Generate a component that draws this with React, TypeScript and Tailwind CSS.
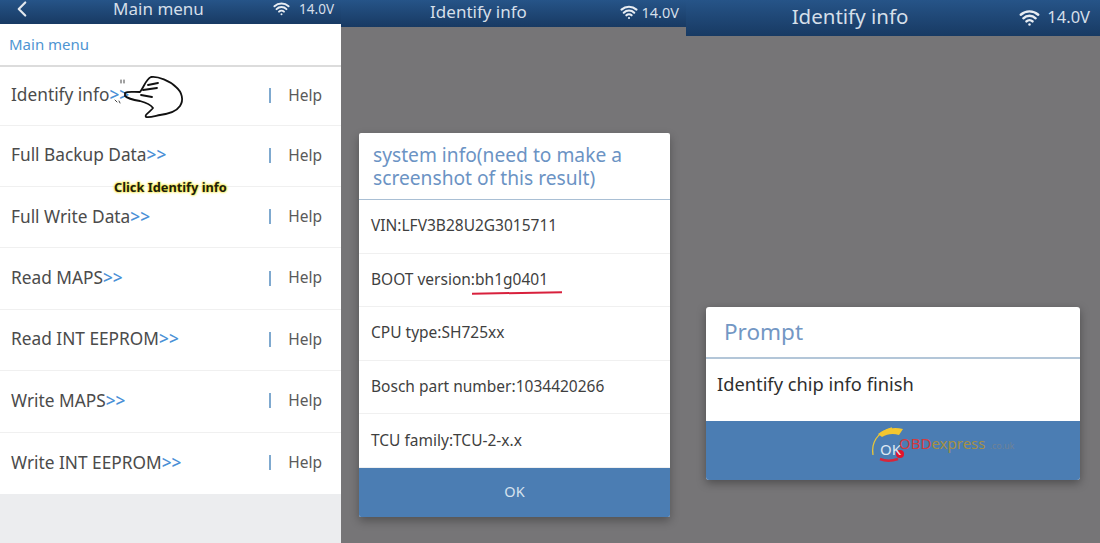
import * as React from 'react';
import { ChevronLeft, Wifi } from 'lucide-react';

const menuItems = [
  'Identify info',
  'Full Backup Data',
  'Full Write Data',
  'Read MAPS',
  'Read INT EEPROM',
  'Write MAPS',
  'Write INT EEPROM',
];

const systemInfo = [
  'VIN:LFV3B28U2G3015711',
  'BOOT version:bh1g0401',
  'CPU type:SH725xx',
  'Bosch part number:1034420266',
  'TCU family:TCU-2-x.x',
];

const Hand = () => (
  <svg
    className="absolute left-[110px] top-[74px]"
    width="78"
    height="48"
    viewBox="110 74 78 48"
    fill="none"
    stroke="#111"
    strokeWidth="1.8"
    strokeLinecap="round"
    strokeLinejoin="round"
  >
    <path d="M125 93 C127 91 133 92 140 92 C144 87 146 79 151 77 C158 76 170 81 176 87 C182 92 184 100 180 106 C176 112 168 114 160 115 C155 116 149 118 146 117 C144 115 150 112 153 108 C151 105 147 103 140 101 C134 100 128 99 125 96 Z" />
    <path d="M148 85 L158 83 M143 90 L157 88 M141 95 L152 97" />
    <path d="M121 80 L121 83 M124 80 L124 83 M115 100 L117 102 M119 101 L120 103" stroke="#444" strokeWidth="1" />
  </svg>
);

const Watermark = () => (
  <div className="absolute left-[164px] top-[2px] h-[56px] w-[160px]">
    <svg className="absolute left-0 top-0" width="40" height="50" viewBox="0 0 40 50" fill="none">
      <path d="M3 32 C1 20 7 9 22 5" stroke="#e8c53a" strokeWidth="1.3" />
      <path d="M8 11 C13 7 22 3 33 6 L29 12 C23 10 17 11 12 14 Z" fill="#f3c62f" />
      <path d="M10 36 C15 38 22 38 28 36" stroke="#d8263a" strokeWidth="2.5" />
      <circle cx="30" cy="31" r="4" fill="#e3132c" />
    </svg>
    <span className="absolute left-[10px] top-[15px] text-[15px] leading-[22px] text-[#dfe8f2]">OK</span>
    <span className="absolute left-[29px] top-[9px] text-[15px] text-[#d33a3f]">
      OBD<span className="text-[#a59043]">express</span>
      <span className="ml-1 text-[9px] text-[#6f8296]">.co.uk</span>
    </span>
  </div>
);

const Header = ({
  title,
  className,
  titleClass,
  children,
}: {
  title: string;
  className: string;
  titleClass: string;
  children?: React.ReactNode;
}) => (
  <header
    className={`relative flex shrink-0 items-center justify-center bg-gradient-to-b from-[#265488] to-[#183a63] text-[#d5dfe9] ${className}`}
  >
    {children}
    <span className={titleClass}>{title}</span>
  </header>
);

const Status = ({ iconSize, textClass, className }: { iconSize: number; textClass: string; className: string }) => (
  <div className={`absolute flex items-center ${className}`}>
    <Wifi size={iconSize} strokeWidth={2.8} className="text-[#e8edf3]" />
    <span className={textClass}>14.0V</span>
  </div>
);

export default function App() {
  return (
    <div className="flex h-[543px] w-[1100px] overflow-hidden bg-[#767577] font-['Noto_Sans',sans-serif]">
      <section className="relative flex w-[341px] shrink-0 flex-col bg-[#ecedef]">
        <Header
          title="Main menu"
          className="h-[24px] overflow-hidden"
          titleClass="relative -top-[3px] -left-[12px] text-[17px] leading-[18px]"
        >
          <ChevronLeft size={26} strokeWidth={2} className="absolute -top-[4px] left-[9px] text-[#e3e8ee]" />
          <Status iconSize={17} className="right-[7px] top-0 gap-[9px]" textClass="text-[13.5px] leading-[16px]" />
        </Header>
        <div className="flex h-[43px] shrink-0 items-center border-b-2 border-[#dcdcdc] bg-white pl-[9px] text-[15px] text-[#4e95d2]">
          Main menu
        </div>
        <ul className="bg-white">
          {menuItems.map((item) => (
            <li
              key={item}
              className="flex h-[61.4px] items-center border-b border-[#f0f0f0] pb-[1px] pl-[11px] pr-[19px] text-[17.3px] text-[#4b4b4b] first:h-[58.6px] last:border-b-0"
            >
              <span className="flex-1">
                {item}
                <span className="font-medium text-[#4a90d6]">&gt;&gt;</span>
              </span>
              <span className="mr-[17px] h-[15px] w-[2px] bg-[#7fa9cf]" />
              <span className="text-[15.5px] text-[#5a5a5a]">Help</span>
            </li>
          ))}
        </ul>
        <Hand />
        <span className="absolute left-[114px] top-[179px] text-[12.8px] font-bold leading-[17px] text-[#1c1c10] [text-shadow:0_0_2px_#f5e63c,0_0_2px_#f5e63c,0_0_3px_#f5e63c]">
          Click Identify info
        </span>
      </section>

      <section className="flex w-[345px] shrink-0 flex-col">
        <Header title="Identify info" className="h-[27px]" titleClass="relative -left-[35px] -top-[2px] text-[17px] leading-[22px]">
          <Status iconSize={18} className="right-[7px] top-[2px] gap-[4px]" textClass="text-[14.5px] leading-[20px]" />
        </Header>
        <div className="ml-[18px] mt-[106px] flex w-[311px] flex-col overflow-hidden rounded-[2px] bg-white shadow-[0_4px_10px_rgba(0,0,0,0.3)]">
          <div className="h-[67px] border-b border-[#a9bfd4] pl-[14px] pt-[10px] text-[19.2px] leading-[23px] text-[#6b93c4]">
            system info(need to make a
            <br />
            screenshot of this result)
          </div>
          {systemInfo.map((line, i) => (
            <div
              key={line}
              className="relative flex h-[53.6px] items-center border-b border-[#f0f0f0] pb-[1px] pl-[12px] text-[15.5px] text-[#3f3f3f] last:border-b-0"
            >
              {line}
              {i === 1 && (
                <span className="absolute left-[113px] top-[38px] h-[2px] w-[90px] -rotate-[1deg] bg-[#d8203c]" />
              )}
            </div>
          ))}
          <div className="flex h-[49px] items-center justify-center bg-[#4b7db3] pb-[2px] text-[14.5px] text-[#d6e2ee]">
            OK
          </div>
        </div>
      </section>

      <section className="flex flex-1 flex-col">
        <Header title="Identify info" className="h-[36px]" titleClass="relative -top-[2px] -left-[43px] text-[20.5px] leading-[28px]">
          <Status iconSize={21} className="right-[10px] top-[5px] gap-[7px]" textClass="text-[16.5px] leading-[24px]" />
        </Header>
        <div className="ml-[20px] mt-[271px] flex w-[374px] flex-col overflow-hidden rounded-[3px] bg-white shadow-[0_3px_10px_rgba(0,0,0,0.35)]">
          <div className="h-[52px] border-b-2 border-[#b3c6d8] pl-[18px] pt-[8px] text-[22.5px] text-[#7397c4]">
            Prompt
          </div>
          <div className="h-[62px] pl-[11px] pt-[11px] text-[18.3px] text-[#2e2e2e]">Identify chip info finish</div>
          <div className="relative h-[59px] bg-[#4b7db3]">
            <Watermark />
          </div>
        </div>
      </section>
    </div>
  );
}
